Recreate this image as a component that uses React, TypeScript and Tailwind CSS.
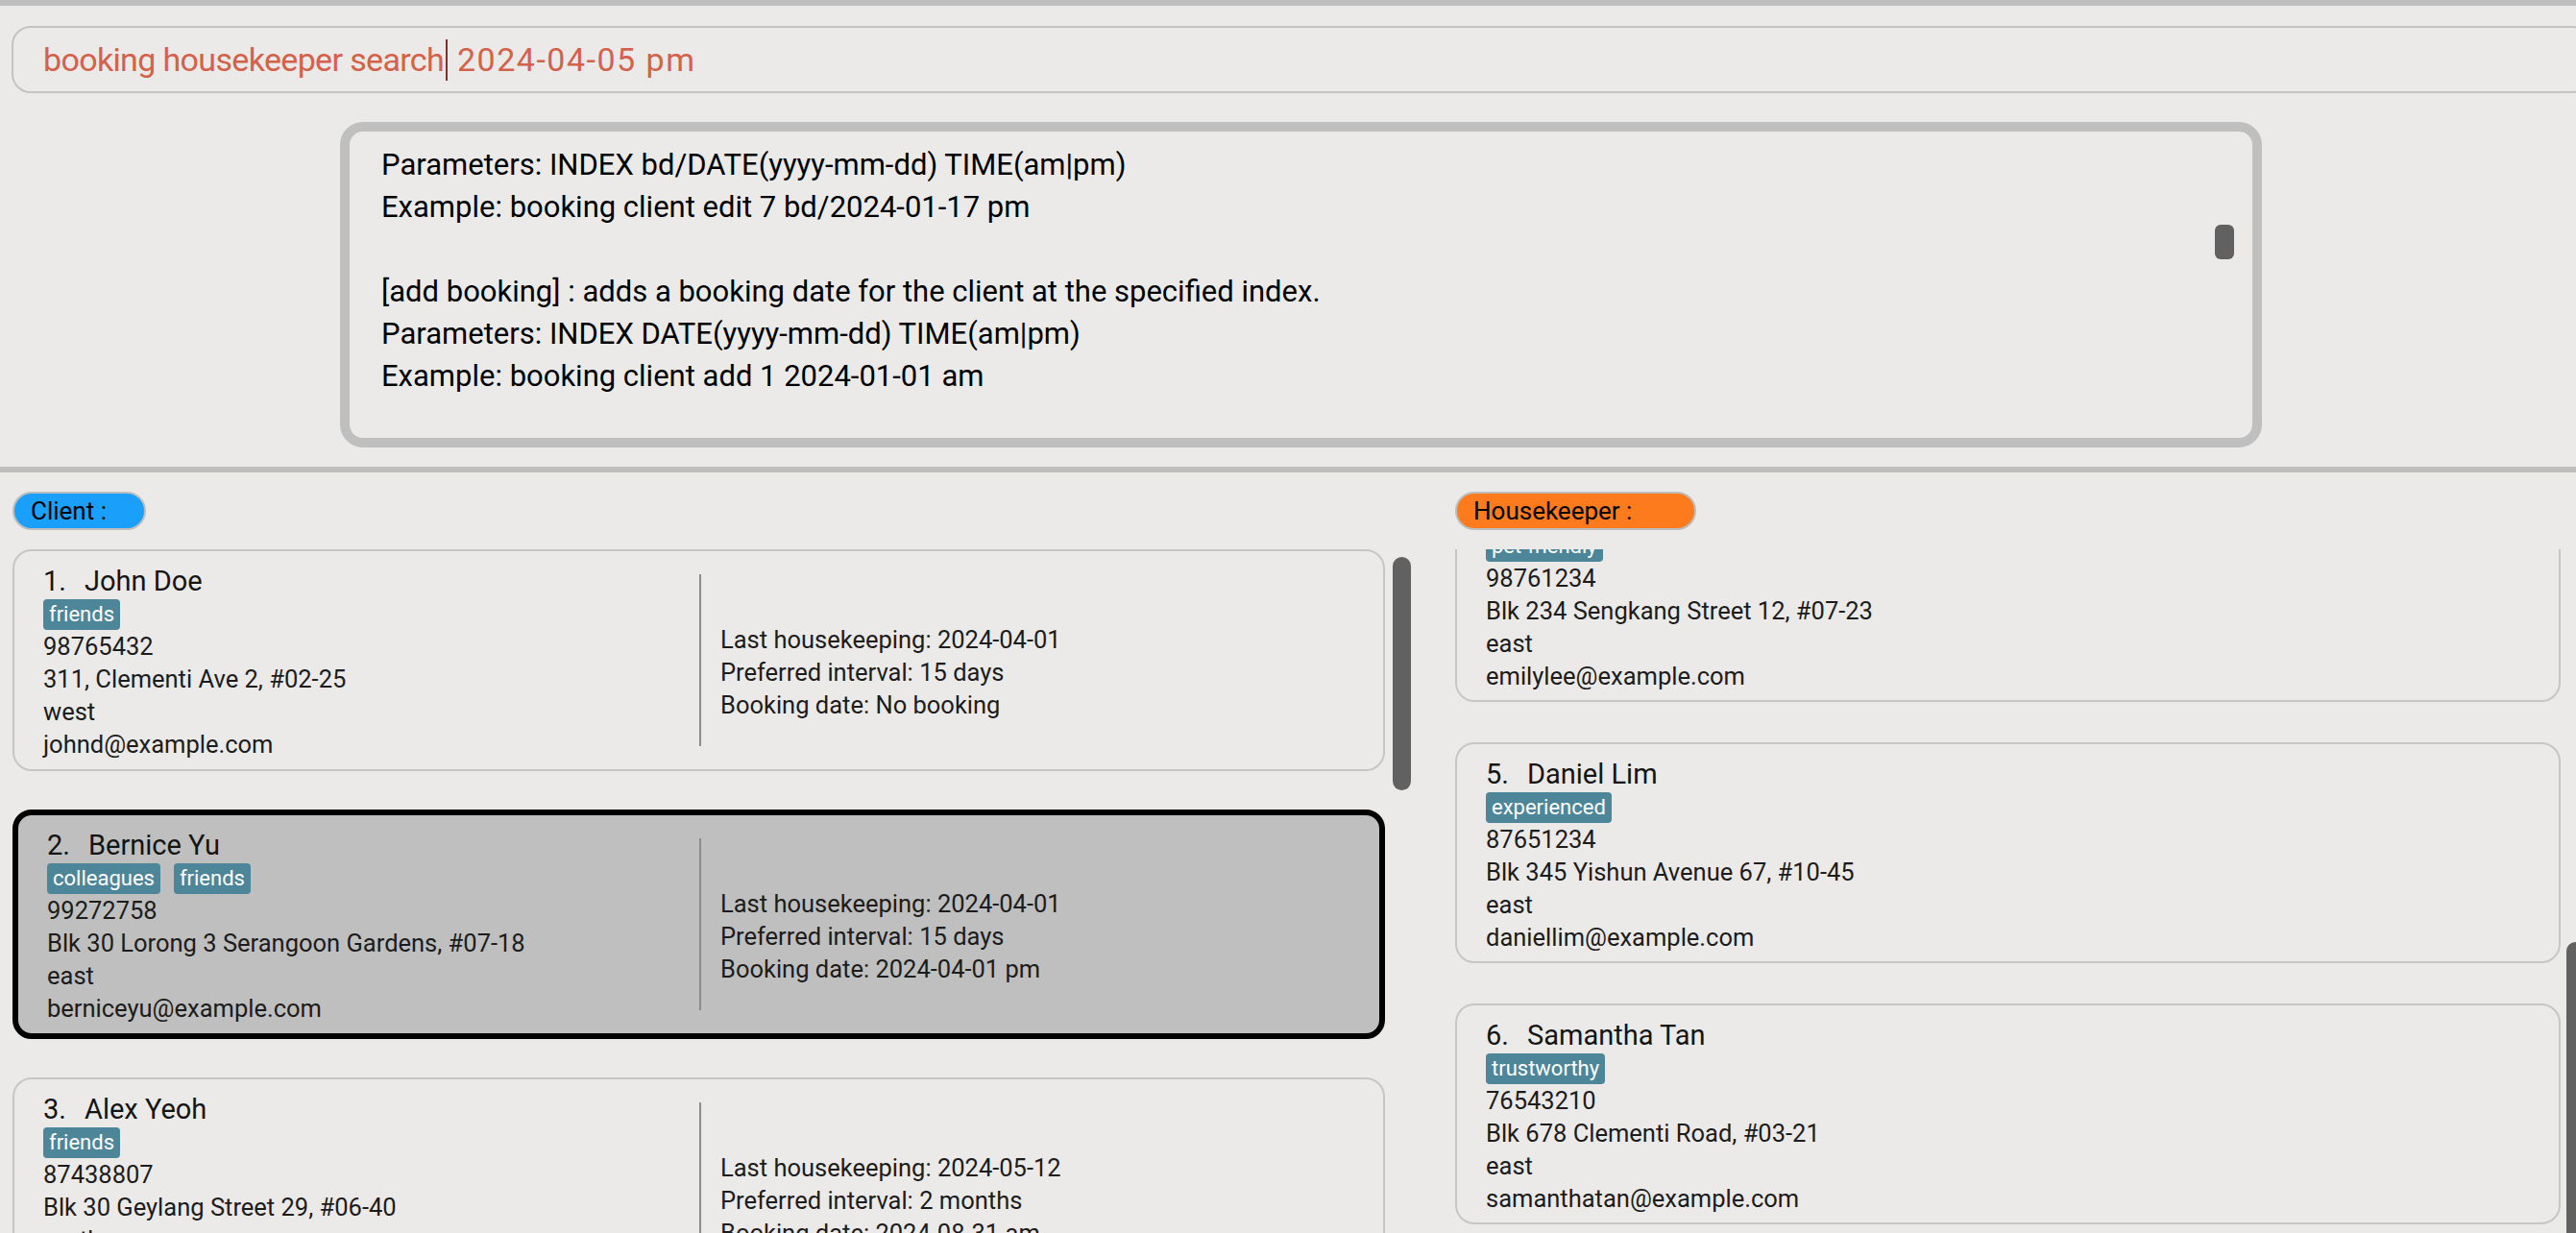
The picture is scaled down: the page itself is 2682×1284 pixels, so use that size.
const clients = [
  {
    id: 1,
    name: "John Doe",
    tags: ["friends"],
    phone: "98765432",
    address: "311, Clementi Ave 2, #02-25",
    area: "west",
    email: "johnd@example.com",
    last: "2024-04-01",
    interval: "15 days",
    booking: "No booking",
    selected: false,
  },
  {
    id: 2,
    name: "Bernice Yu",
    tags: ["colleagues", "friends"],
    phone: "99272758",
    address: "Blk 30 Lorong 3 Serangoon Gardens, #07-18",
    area: "east",
    email: "berniceyu@example.com",
    last: "2024-04-01",
    interval: "15 days",
    booking: "2024-04-01 pm",
    selected: true,
  },
  {
    id: 3,
    name: "Alex Yeoh",
    tags: ["friends"],
    phone: "87438807",
    address: "Blk 30 Geylang Street 29, #06-40",
    area: "north",
    email: "alexyeoh@example.com",
    last: "2024-05-12",
    interval: "2 months",
    booking: "2024-08-31 am",
    selected: false,
  },
];

const housekeepers = [
  {
    id: 4,
    name: "Emily Lee",
    tags: ["pet-friendly"],
    phone: "98761234",
    address: "Blk 234 Sengkang Street 12, #07-23",
    area: "east",
    email: "emilylee@example.com",
  },
  {
    id: 5,
    name: "Daniel Lim",
    tags: ["experienced"],
    phone: "87651234",
    address: "Blk 345 Yishun Avenue 67, #10-45",
    area: "east",
    email: "daniellim@example.com",
  },
  {
    id: 6,
    name: "Samantha Tan",
    tags: ["trustworthy"],
    phone: "76543210",
    address: "Blk 678 Clementi Road, #03-21",
    area: "east",
    email: "samanthatan@example.com",
  },
];

const resultLines = [
  "Parameters: INDEX bd/DATE(yyyy-mm-dd) TIME(am|pm)",
  "Example: booking client edit 7 bd/2024-01-17 pm",
  "",
  "[add booking] : adds a booking date for the client at the specified index.",
  "Parameters: INDEX DATE(yyyy-mm-dd) TIME(am|pm)",
  "Example: booking client add 1 2024-01-01 am",
];

// eslint-disable-next-line @typescript-eslint/no-explicit-any
const PersonInfo = ({ person }: any) => {
  return (
    <div className="flex flex-col">
      <div className="flex items-baseline text-[29px] leading-[36px] text-[#141414]">
        <span className="mr-[19px]">{person.id}.</span>
        <span>{person.name}</span>
      </div>
      <div className="flex gap-[14px] mt-[1px]">
        {person.tags.map((tag: string) => (
          <span
            key={tag}
            className="h-[32px] px-[6px] rounded-[4px] bg-[#4e8699] text-white text-[22px] leading-[32px]"
          >
            {tag}
          </span>
        ))}
      </div>
      <div className="text-[25.5px] leading-[34px] text-[#1c1c1c]">
        <p>{person.phone}</p>
        <p>{person.address}</p>
        <p>{person.area}</p>
        <p>{person.email}</p>
      </div>
    </div>
  );
};

// eslint-disable-next-line @typescript-eslint/no-explicit-any
const ClientCard = ({ client }: any) => {
  return (
    <div
      className={`flex rounded-[20px] ${
        client.selected
          ? "border-[6px] border-black bg-[#bfbfbf]"
          : "border-2 border-[#c6c6c6]"
      }`}
    >
      <div
        className={`pl-[30px] pt-[13px] pb-[9px] ${
          client.selected ? "w-[709px]" : "w-[713px]"
        }`}
      >
        <PersonInfo person={client} />
      </div>
      <div className="w-[2px] my-[24px] bg-[#8c8c8c]" />
      <div className="flex flex-col justify-center pl-[20px] pt-[24px] text-[25.5px] leading-[34px] text-[#1c1c1c]">
        <p>Last housekeeping: {client.last}</p>
        <p>Preferred interval: {client.interval}</p>
        <p>Booking date: {client.booking}</p>
      </div>
    </div>
  );
};

// eslint-disable-next-line @typescript-eslint/no-explicit-any
const HousekeeperCard = ({ person }: any) => {
  return (
    <div className="rounded-[20px] border-2 border-[#c6c6c6] pl-[30px] pt-[13px] pb-[8px]">
      <PersonInfo person={person} />
    </div>
  );
};

const App = () => {
  return (
    <div className="w-[2682px] h-[1284px] overflow-hidden bg-[#ebeae8] font-[Roboto,sans-serif]">
      <div className="w-[2710px]">
        <div className="h-[6px] bg-[#bebebe]" />

        <div className="pt-[21px] px-[12px]">
          <div className="h-[70px] flex items-center pl-[31px] rounded-[20px] border-2 border-[#c3c3c3] text-[34px] text-[#d4614a]">
            <span className="tracking-[-0.65px]">booking housekeeper search</span>
            <span className="w-[2px] h-[43px] bg-[#7a3326] ml-[2px]" />
            <span className="whitespace-pre tracking-[1.5px]"> 2024-04-05 pm</span>
          </div>
        </div>

        <div className="mt-[30px] ml-[354px] w-[2001px] h-[339px] flex rounded-[24px] border-[10px] border-[#bfbfbf] overflow-hidden">
          <div className="flex-1 pl-[33px] pt-[13px] text-[31px] leading-[44px] text-black">
            {resultLines.map((line, index) => (
              <p key={index} className="h-[44px]">
                {line}
              </p>
            ))}
          </div>
          <div className="w-[20px] mr-[19px]">
            <div className="mt-[97px] h-[36px] rounded-[6px] bg-[#616161]" />
          </div>
        </div>

        <div className="mt-[20px] h-[6px] bg-[#bebebe]" />

        <div className="flex pt-[20px] pl-[13px] gap-[46px]">
          <div className="w-[1456px] flex flex-col">
            <div className="w-[139px] h-[40px] flex items-center pl-[17px] rounded-full border-2 border-[#bdbdbd] bg-[#1a9ffa] text-[26px] text-black">
              Client :
            </div>
            <div className="mt-[20px] h-[712px] flex gap-[8px] overflow-hidden">
              <div className="w-[1429px] flex flex-col gap-[40px]">
                {clients.map((client) => (
                  <ClientCard key={client.id} client={client} />
                ))}
              </div>
              <div className="w-[19px]">
                <div className="mt-[8px] h-[243px] rounded-[10px] bg-[#616161]" />
              </div>
            </div>
          </div>

          <div className="w-[1177px] flex flex-col">
            <div className="w-[251px] h-[40px] flex items-center pl-[17px] rounded-full border-2 border-[#bdbdbd] bg-[#fd7b1c] text-[26px] text-black">
              Housekeeper :
            </div>
            <div className="mt-[20px] h-[712px] flex gap-[6px] overflow-hidden">
              <div className="w-[1151px] overflow-hidden">
                <div className="-mt-[71px] flex flex-col gap-[42px]">
                  {housekeepers.map((person) => (
                    <HousekeeperCard key={person.id} person={person} />
                  ))}
                </div>
              </div>
              <div className="w-[19px]">
                <div className="mt-[409px] h-[400px] rounded-[10px] bg-[#616161]" />
              </div>
            </div>
          </div>
        </div>
      </div>
    </div>
  );
};

export default App;
